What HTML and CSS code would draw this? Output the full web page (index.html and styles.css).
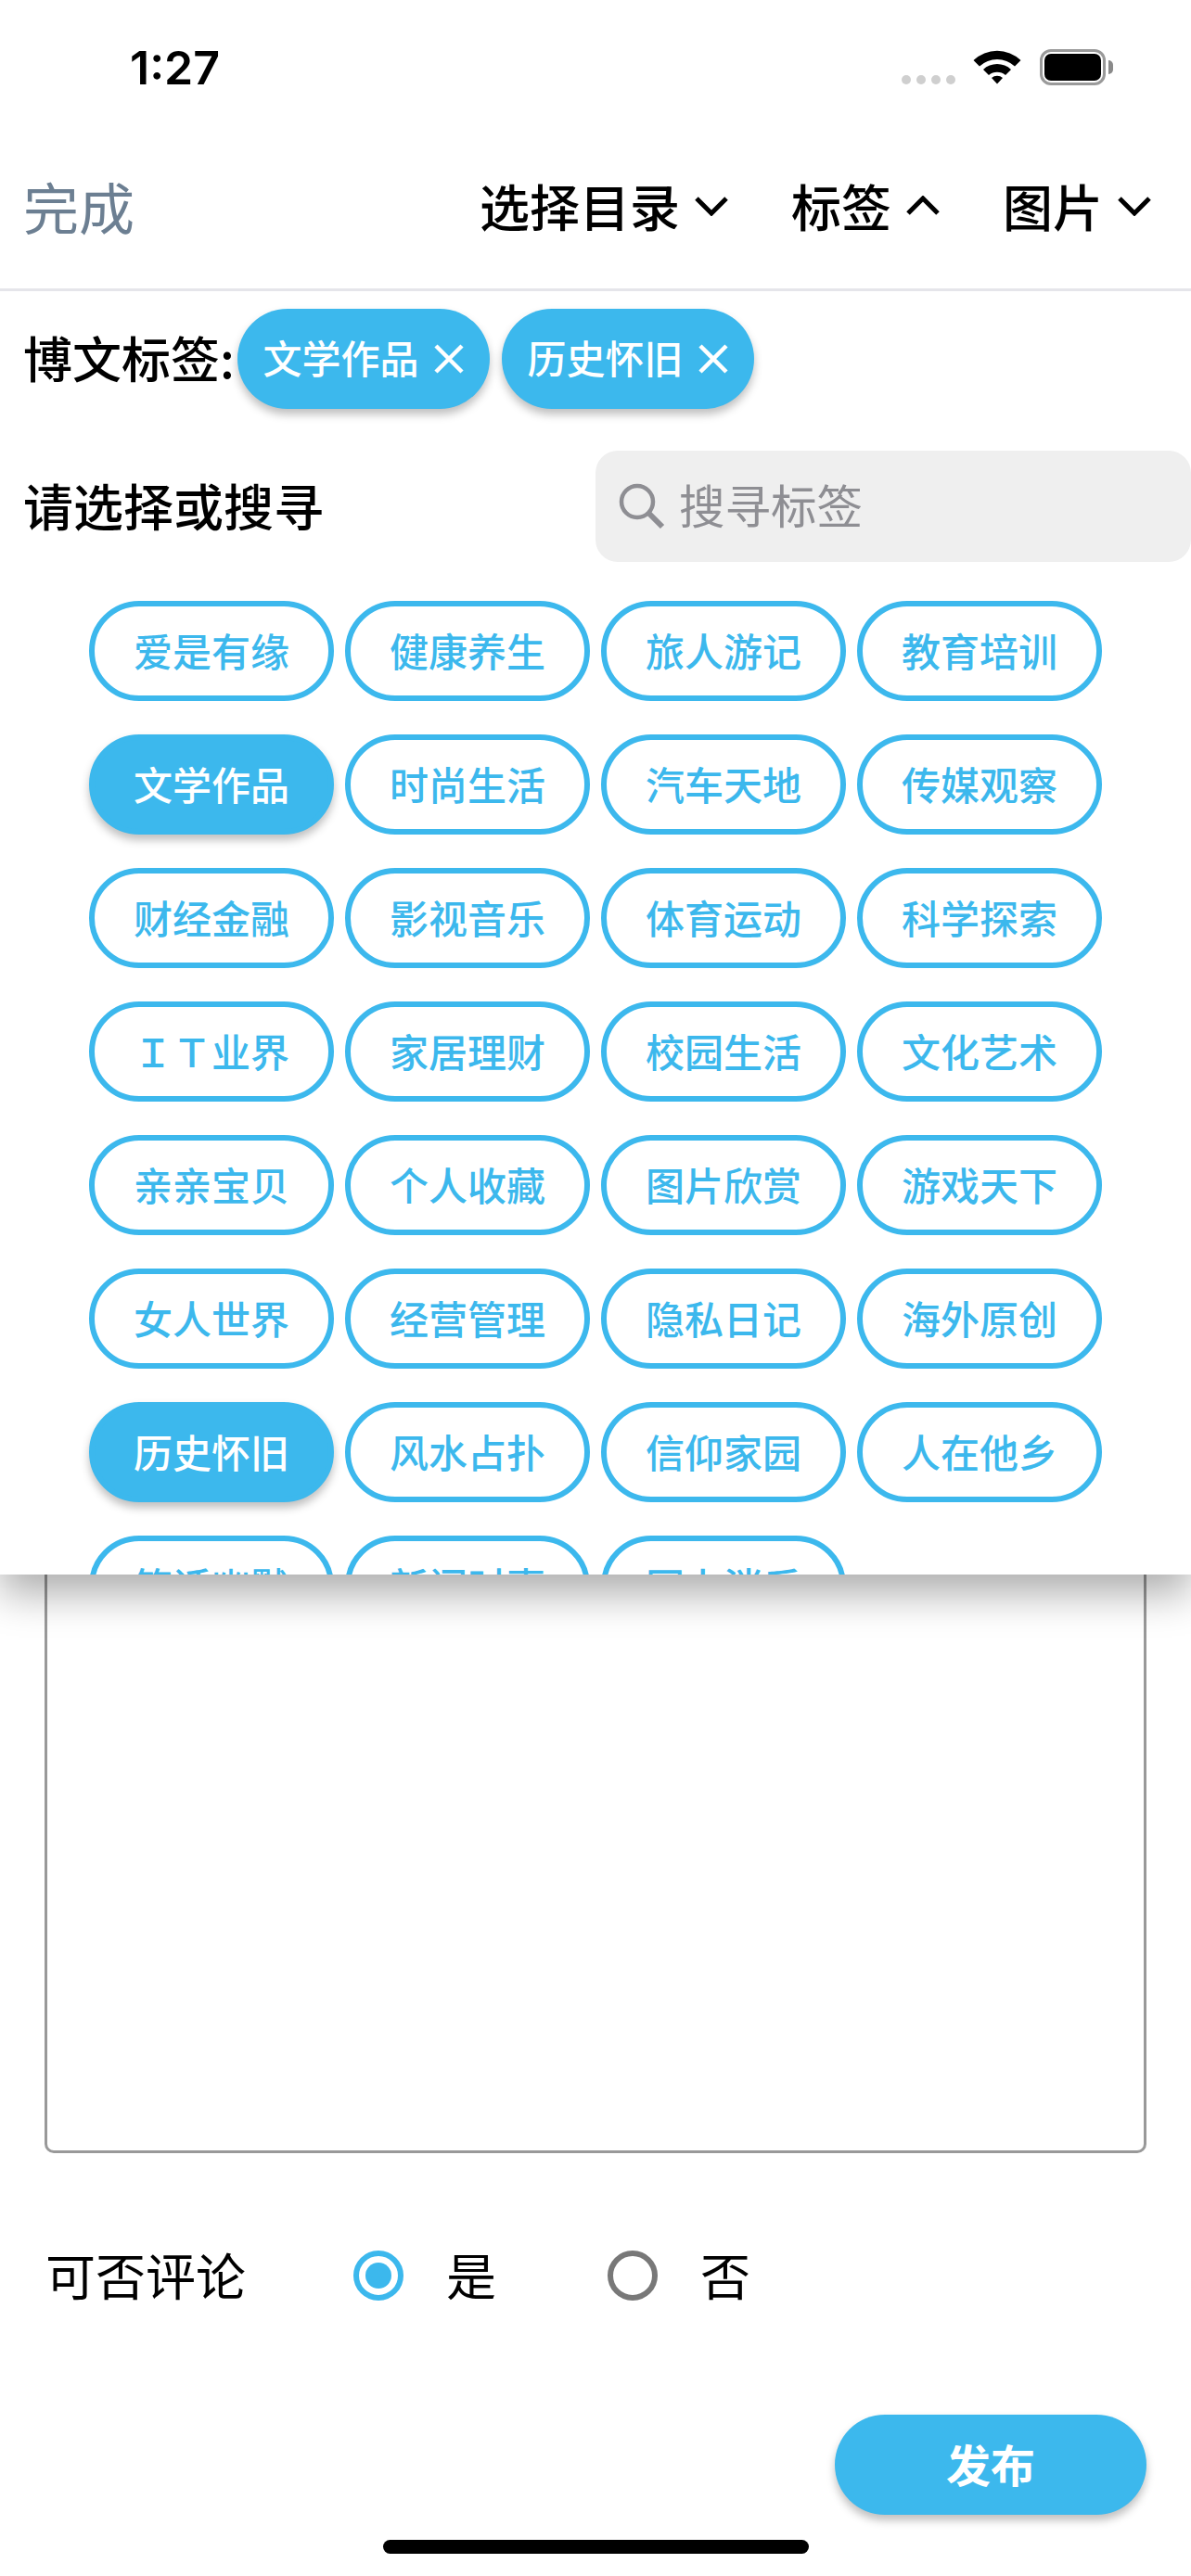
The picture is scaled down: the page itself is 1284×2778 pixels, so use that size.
FILE: index.html
```html
<!DOCTYPE html>
<html lang="zh-CN">
<head>
  <meta charset="UTF-8" />
  <title>发布博文</title>
  <link rel="stylesheet" href="styles.css">
</head>
<body>
  <div class="phone">
    <div class="top">
      <div class="status-bar">
        <span class="time">1:27</span>
        <div class="status-icons">
          <div class="signal"><i></i><i></i><i></i><i></i></div>
          <svg class="wifi" width="52" height="38" viewBox="0 0 52 38">
            <path d="M0.500 12 A37 37 0 0 1 51.500 12 L45 18.500 A28 28 0 0 0 7 18.500 Z" fill="#000"/>
            <path d="M11 22 A22 22 0 0 1 41 22 L35 28 A14 14 0 0 0 17 28 Z" fill="#000"/>
            <path d="M20 31 A9 9 0 0 1 32 31 L26 37.500 Z" fill="#000"/>
          </svg>
          <div class="battery"><div class="battery-fill"></div></div>
        </div>
      </div>

      <div class="nav">
        <span class="done">完成</span>
        <div class="nav-menus">
          <div class="nav-item">选择目录
            <svg width="36" height="22" viewBox="0 0 36 22"><path d="M2 3 L18 19 L34 3" fill="none" stroke="#000" stroke-width="5"/></svg>
          </div>
          <div class="nav-item">标签
            <svg width="36" height="22" viewBox="0 0 36 22"><path d="M2 19 L18 3 L34 19" fill="none" stroke="#000" stroke-width="5"/></svg>
          </div>
          <div class="nav-item">图片
            <svg width="36" height="22" viewBox="0 0 36 22"><path d="M2 3 L18 19 L34 3" fill="none" stroke="#000" stroke-width="5"/></svg>
          </div>
        </div>
      </div>
    </div>

    <div class="content">
      <div class="editor"></div>
      <div class="comment-row">
        <span class="comment-label">可否评论</span>
        <div class="radio radio-on"><i></i></div>
        <span class="radio-text">是</span>
        <div class="radio"></div>
        <span class="radio-text">否</span>
      </div>
      <div class="publish-row">
        <button class="publish">发布</button>
      </div>
    </div>

    <div class="home-bar"></div>

    <div class="panel">
      <div class="picked">
        <span class="picked-label">博文标签:</span>
        <div class="picked-chip"><span>文学作品</span>
          <svg width="34" height="34" viewBox="0 0 34 34"><path d="M3 3 L31 31 M31 3 L3 31" stroke="#fff" stroke-width="4.500"/></svg>
        </div>
        <div class="picked-chip"><span>历史怀旧</span>
          <svg width="34" height="34" viewBox="0 0 34 34"><path d="M3 3 L31 31 M31 3 L3 31" stroke="#fff" stroke-width="4.500"/></svg>
        </div>
      </div>

      <div class="search-row">
        <span class="search-label">请选择或搜寻</span>
        <div class="search-box">
          <svg width="50" height="50" viewBox="0 0 50 50">
            <circle cx="20" cy="20" r="17" fill="none" stroke="#8e8e93" stroke-width="4.500"/>
            <path d="M32 32 L47 47" stroke="#8e8e93" stroke-width="6"/>
          </svg>
          <span class="search-text">搜寻标签</span>
        </div>
      </div>

      <div class="tags">
        <div class="tag">爱是有缘</div>
        <div class="tag">健康养生</div>
        <div class="tag">旅人游记</div>
        <div class="tag">教育培训</div>
        <div class="tag tag-on">文学作品</div>
        <div class="tag">时尚生活</div>
        <div class="tag">汽车天地</div>
        <div class="tag">传媒观察</div>
        <div class="tag">财经金融</div>
        <div class="tag">影视音乐</div>
        <div class="tag">体育运动</div>
        <div class="tag">科学探索</div>
        <div class="tag">ＩＴ业界</div>
        <div class="tag">家居理财</div>
        <div class="tag">校园生活</div>
        <div class="tag">文化艺术</div>
        <div class="tag">亲亲宝贝</div>
        <div class="tag">个人收藏</div>
        <div class="tag">图片欣赏</div>
        <div class="tag">游戏天下</div>
        <div class="tag">女人世界</div>
        <div class="tag">经营管理</div>
        <div class="tag">隐私日记</div>
        <div class="tag">海外原创</div>
        <div class="tag tag-on">历史怀旧</div>
        <div class="tag">风水占扑</div>
        <div class="tag">信仰家园</div>
        <div class="tag">人在他乡</div>
        <div class="tag">笑话幽默</div>
        <div class="tag">新闻时事</div>
        <div class="tag">同上消后</div>
      </div>
    </div>
  </div>
</body>
</html>
```

FILE: styles.css
```css
* {
  box-sizing: border-box;
}
body {
  margin: 0;
  background: #fff;
  color: #000;
  font-family: "Noto Sans CJK SC", "Noto Sans", sans-serif;
}
.phone {
  position: relative;
  width: 1284px;
  height: 2778px;
  overflow: hidden;
  background: #fff;
}
.top {
  position: relative;
  z-index: 2;
  background: #fff;
}

/* status bar */
.status-bar {
  display: flex;
  justify-content: space-between;
  align-items: flex-end;
  height: 100px;
  padding: 0 82px 8px 140px;
}
.time {
  font-family: Inter, sans-serif;
  font-size: 50px;
  font-weight: 600;
  line-height: 1;
  margin-bottom: -6px;
}
.status-icons {
  display: flex;
  align-items: flex-end;
}
.signal {
  display: flex;
  gap: 6px;
  margin-right: 19px;
  margin-bottom: 1px;
}
.signal i {
  width: 10px;
  height: 10px;
  border-radius: 50%;
  background: #cfcfcf;
}
.wifi {
  margin-right: 20px;
  margin-bottom: 1px;
}
.battery {
  position: relative;
  width: 71px;
  height: 39px;
  margin-right: 10px;
  padding: 2px;
  border: 3px solid #9a9a9a;
  border-radius: 12px;
}
.battery::after {
  content: "";
  position: absolute;
  right: -11px;
  top: 9px;
  width: 5px;
  height: 15px;
  border-radius: 0 5px 5px 0;
  background: #8a8a8a;
}
.battery-fill {
  height: 100%;
  background: #000;
  border-radius: 7px;
}

/* nav */
.nav {
  display: flex;
  justify-content: space-between;
  align-items: center;
  height: 214px;
  padding: 33px 43px 0 25px;
  border-bottom: 3px solid #e5e5ea;
}
.done {
  font-size: 60px;
  color: #6c7f92;
  line-height: 1;
}
.nav-menus {
  display: flex;
  gap: 68px;
}
.nav-item {
  display: flex;
  align-items: center;
  gap: 16px;
  font-size: 54px;
  font-weight: 500;
  line-height: 1;
}

/* page under the panel */
.content {
  padding: 0 48px;
}
.editor {
  height: 2008px;
  border: 3px solid #999;
  border-radius: 10px;
}
.comment-row {
  display: flex;
  align-items: center;
  height: 54px;
  margin-top: 105px;
  font-size: 54px;
  line-height: 1;
}
.comment-label {
  width: 333px;
  padding-left: 1px;
  margin-top: -2px;
}
.radio {
  display: flex;
  align-items: center;
  justify-content: center;
  width: 54px;
  height: 54px;
  border: 6px solid #787878;
  border-radius: 50%;
}
.radio-on {
  border-color: #3cb8ed;
}
.radio-on i {
  width: 28px;
  height: 28px;
  border-radius: 50%;
  background: #3cb8ed;
}
.radio-text {
  width: 220px;
  padding-left: 46px;
  margin-top: -2px;
}
.publish-row {
  display: flex;
  justify-content: flex-end;
  margin-top: 123px;
}
.publish {
  width: 336px;
  height: 108px;
  padding-bottom: 5px;
  border: none;
  border-radius: 54px;
  background: #3cb8ed;
  color: #fff;
  font-family: inherit;
  font-size: 48px;
  font-weight: 700;
  box-shadow: 0 6px 10px rgba(0, 0, 0, 0.25);
}
.home-bar {
  width: 459px;
  height: 15px;
  margin: 27px auto 0;
  border-radius: 8px;
  background: #000;
}

/* tag panel, drops over the page */
.panel {
  position: absolute;
  top: 314px;
  left: 0;
  right: 0;
  height: 1384px;
  overflow: hidden;
  padding-top: 19px;
  background: #fff;
  box-shadow: 0 20px 42px rgba(0, 0, 0, 0.33);
}
.picked {
  display: flex;
  align-items: center;
  padding-left: 25px;
}
.picked-label {
  width: 231px;
  font-size: 53px;
  font-weight: 500;
  line-height: 1;
  white-space: nowrap;
  margin-top: -3px;
}
.picked-chip {
  display: flex;
  align-items: center;
  justify-content: center;
  gap: 15px;
  width: 272px;
  height: 108px;
  margin-right: 13px;
  border-radius: 54px;
  background: #3cb8ed;
  color: #fff;
  font-size: 42px;
  font-weight: 500;
  line-height: 1;
  box-shadow: 0 6px 10px rgba(0, 0, 0, 0.25);
}
.picked-chip span {
  margin-top: -4px;
}
.search-row {
  display: flex;
  justify-content: space-between;
  align-items: center;
  margin-top: 45px;
  padding-left: 26px;
}
.search-label {
  font-size: 54px;
  font-weight: 500;
  line-height: 1;
  margin-left: -1px;
  margin-top: -3px;
}
.search-box {
  display: flex;
  align-items: center;
  gap: 15px;
  width: 642px;
  height: 120px;
  padding-left: 25px;
  border-radius: 24px;
  background: #efefef;
  color: #8e8e93;
  font-size: 49.500px;
  line-height: 1;
}
.search-text {
  margin-top: -4px;
}
.tags {
  display: grid;
  grid-template-columns: repeat(4, 264px);
  gap: 36px 12px;
  margin-top: 42px;
  padding-left: 96px;
}
.tag {
  display: flex;
  align-items: center;
  justify-content: center;
  height: 108px;
  padding-bottom: 2px;
  border: 6px solid #3cb8ed;
  border-radius: 54px;
  color: #3cb8ed;
  font-size: 42px;
  font-weight: 500;
  line-height: 1;
}
.tag-on {
  background: #3cb8ed;
  color: #fff;
  box-shadow: 0 6px 10px rgba(0, 0, 0, 0.25);
}
```
